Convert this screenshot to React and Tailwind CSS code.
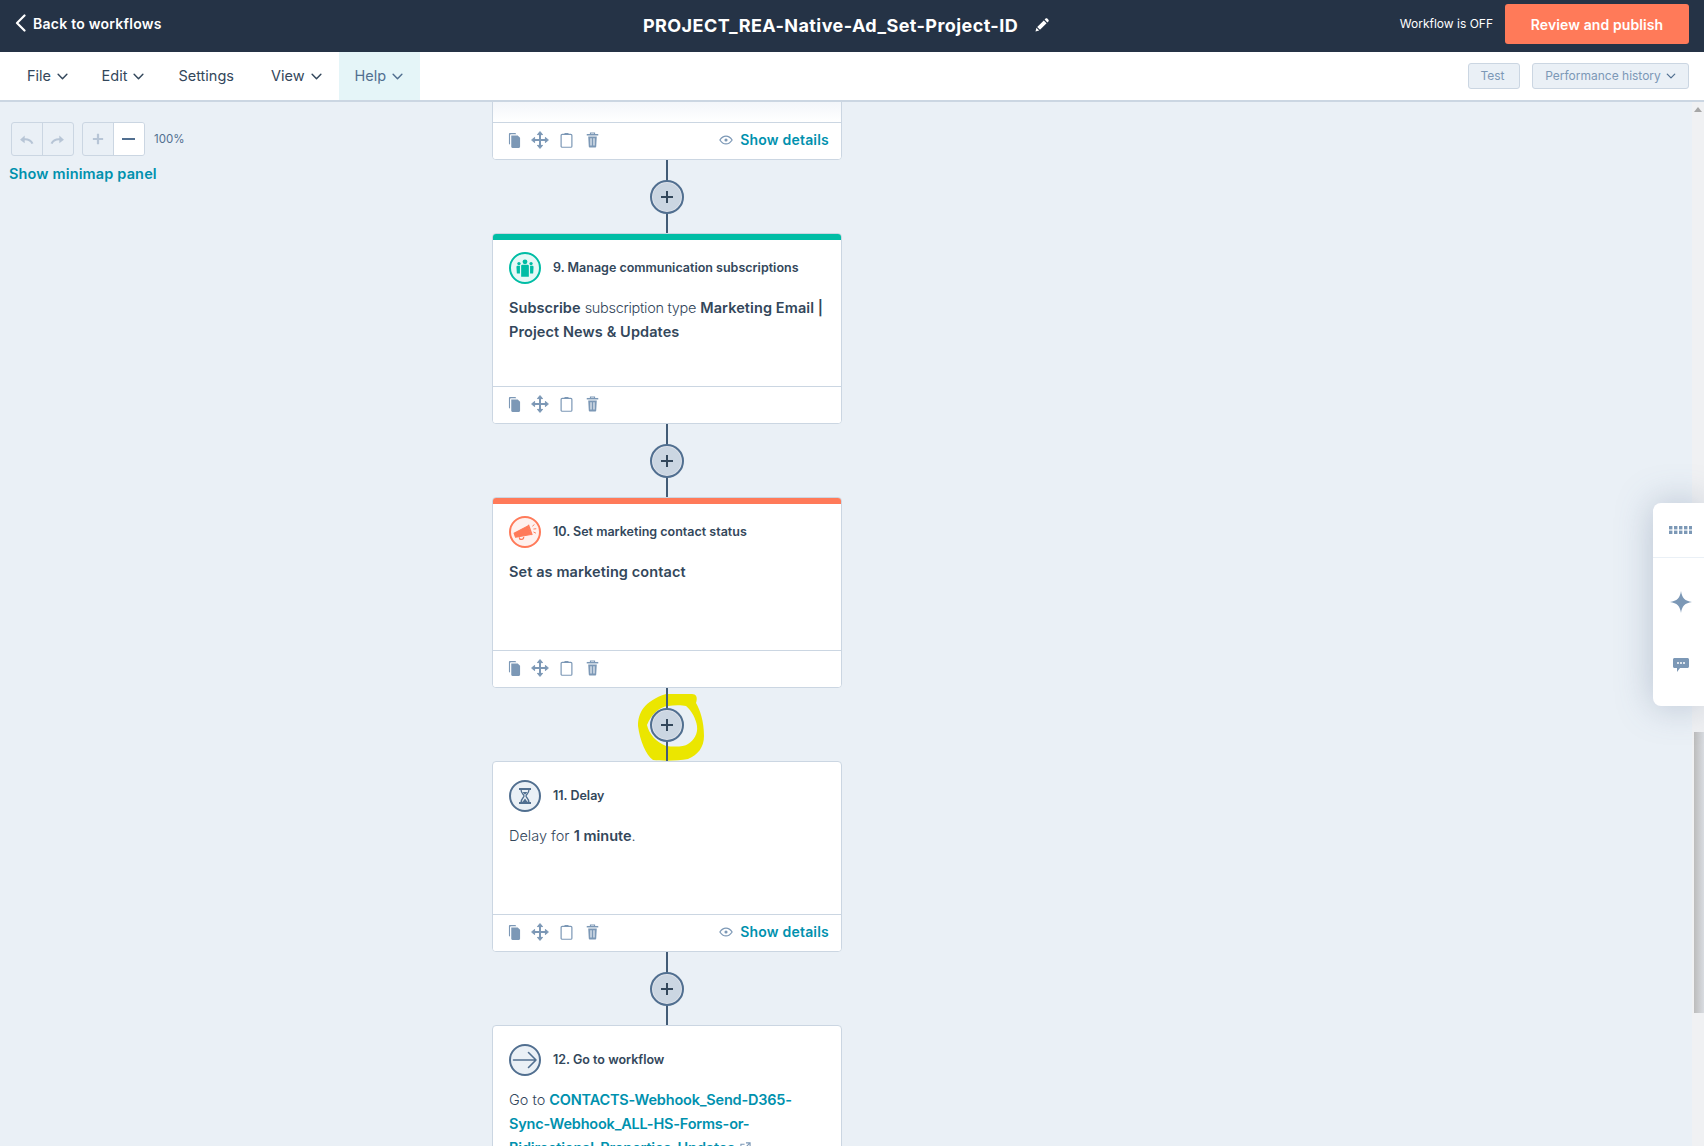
function Chevron({ className = 'w-[11px] h-[7px]' }) {
  return (
    <svg viewBox="0 0 12 8" className={className} fill="none" stroke="currentColor" strokeWidth="1.7" strokeLinecap="round" strokeLinejoin="round">
      <path d="M1 1.5 6 6.5 11 1.5" />
    </svg>
  );
}

function CopyIcon() {
  return (
    <svg viewBox="0 0 14 16" className="w-[13px] h-[15px]" fill="#7c98b6">
      <path d="M1 1.2C1 .5 1.5 0 2.2 0H8L9 1.2H3.5C2.7 1.2 2.2 1.8 2.2 2.5V12.2H1.8C1.3 12.2 1 11.8 1 11.3Z" />
      <path d="M3.5 2.5H10.5L13 5V14.5C13 15.3 12.5 16 11.7 16H4.8C4 16 3.5 15.3 3.5 14.5Z" />
    </svg>
  );
}
function MoveIcon() {
  return (
    <svg viewBox="0 0 18 18" className="w-[18px] h-[18px]" fill="#7c98b6" stroke="#7c98b6" strokeWidth="2">
      <path d="M9 2.5V15.5M2.5 9H15.5" fill="none" />
      <path d="M9 .6 11.6 3.6H6.4ZM9 17.4 6.4 14.4H11.6ZM.6 9 3.6 6.4V11.6ZM17.4 9 14.4 11.6V6.4Z" strokeWidth="1" strokeLinejoin="round" />
    </svg>
  );
}
function ClipIcon() {
  return (
    <svg viewBox="0 0 14 17" className="w-[13px] h-[16px]" fill="none" stroke="#7c98b6" strokeWidth="1.3">
      <rect x="1.2" y="2.5" width="11.6" height="13.8" rx="1.2" />
      <path d="M4.5 2.5C4.5 1.6 5 1 5.8 1H8.2C9 1 9.5 1.6 9.5 2.5V3.2H4.5Z" fill="#7c98b6" stroke="none" />
    </svg>
  );
}
function TrashIcon() {
  return (
    <svg viewBox="0 0 14 17" className="w-[13px] h-[16px]" fill="none" stroke="#7c98b6">
      <path d="M.8 2.8H13.2" strokeWidth="1.6" />
      <path d="M4.8 2.5V1H9.2V2.5" strokeWidth="1.2" />
      <path d="M2.4 4.6H11.6L11 15.6C11 16.2 10.6 16.6 10 16.6H4C3.4 16.6 3 16.2 3 15.6Z" fill="#7c98b6" stroke="none" />
      <path d="M5.4 6.5V14.5M8.6 6.5V14.5" stroke="#fff" strokeWidth="1.1" />
    </svg>
  );
}
function EyeIcon() {
  return (
    <svg viewBox="0 0 16 11" className="w-[14px] h-[10px]" fill="none" stroke="#7c98b6" strokeWidth="1.4">
      <path d="M1 5.5C3 2.4 5.3 1 8 1S13 2.4 15 5.5C13 8.6 10.7 10 8 10S3 8.6 1 5.5Z" />
      <circle cx="8" cy="5.5" r="1.8" fill="#7c98b6" stroke="none" />
    </svg>
  );
}

function PeopleIcon() {
  return (
    <svg viewBox="0 0 20 16" className="w-[22px] h-[18px]" fill="#00bda5">
      <circle cx="10" cy="2.4" r="2.2" />
      <path d="M6.5 6C6.5 5.2 7.2 5 8 5H12C12.8 5 13.5 5.2 13.5 6V16H6.5Z" />
      <circle cx="4.5" cy="4" r="1.5" />
      <path d="M2.2 7C2.2 6.4 2.8 6 3.4 6H5.4V13H2.6Z" />
      <circle cx="15.5" cy="4" r="1.5" />
      <path d="M17.8 7C17.8 6.4 17.2 6 16.6 6H14.6V13H17.4Z" />
    </svg>
  );
}
function MegaphoneIcon() {
  return (
    <svg viewBox="0 0 24 18" className="w-[25px] h-[19px] -rotate-6" fill="none" stroke="#ff7a59">
      <path d="M1 8.5 15 3 17 11.5 2 12.5Z" fill="#ff7a59" strokeWidth="1" strokeLinejoin="round" />
      <path d="M15.5 2 18 12" strokeWidth="1.4" />
      <path d="M5.5 13C5.5 16 9.8 16 9.8 13" strokeWidth="1.2" />
      <path d="M19.5 3.5 21 2.5M20.3 6.5H22.3M20 9.5 21.6 10.5" strokeWidth="0.9" strokeLinecap="round" />
    </svg>
  );
}
function HourglassIcon() {
  return (
    <svg viewBox="0 0 14 16" className="w-[14px] h-[16px]" fill="none" stroke="#516f90" strokeWidth="1.5">
      <path d="M1 1H13M1 15H13" strokeWidth="1.8" />
      <path d="M3 1.5C3 5.2 6 6.6 6 8S3 10.8 3 14.5H11C11 10.8 8 9.4 8 8S11 5.2 11 1.5" strokeWidth="1.3" />
      <path d="M4.5 14 7 10.5 9.5 14Z" fill="#516f90" stroke="none" />
      <path d="M4.6 4H9.4L7 6.8Z" fill="#516f90" stroke="none" />
    </svg>
  );
}
function ArrowIcon() {
  return (
    <svg viewBox="0 0 26 18" className="w-[26px] h-[18px]" fill="none" stroke="#516f90" strokeWidth="1.6" strokeLinecap="round" strokeLinejoin="round">
      <path d="M1.5 9H24M16.5 1.5 24 9 16.5 16.5" />
    </svg>
  );
}

function Plus({ className, stroke = 2 }) {
  return (
    <svg viewBox="0 0 14 14" className={className} fill="none" stroke="currentColor" strokeWidth={stroke}>
      <path d="M7 1V13M1 7H13" />
    </svg>
  );
}

function Connector({ highlight }) {
  return (
    <div className="relative h-[73px] flex items-center justify-center">
      {highlight && (
        <svg viewBox="0 0 66 68" className="absolute left-[146px] top-[5px] w-[66px] h-[68px]" fill="#ebe600" fillRule="evenodd">
          <path d="M28 1H54C58 1 60 4 58 10C62 17 66 28 66 43C66 54 60 62 50 66C40 68 24 68 15 67C8 62 2 48 0 33C0 20 6 8 28 1ZM30 13C22 14 14 20 9 32C11 41 18 49 28 53C36 54 46 54 50 51C56 47 60 41 59 33C58 26 54 18 48 13C44 12 36 12 30 13Z" />
        </svg>
      )}
      <div className="absolute top-0 bottom-0 left-1/2 -translate-x-1/2 w-[2px] bg-[#425b76]" />
      <div className="relative w-[34px] h-[34px] rounded-full bg-[#cbd6e2] border-2 border-[#516f90] flex items-center justify-center text-[#33475b] ring-1 ring-inset ring-[#dfe3eb]">
        <Plus className="w-[14px] h-[14px]" stroke={2} />
      </div>
    </div>
  );
}

function Card({ bar, iconRing, iconBg = 'bg-transparent', icon, title, children, details, className = '', bodyClass = '' }) {
  return (
    <div className={`flex flex-col h-[191px] rounded-[4px] border border-[#cbd6e2] bg-white overflow-hidden ${className}`}>
      <div className={`flex-1 min-h-0 flex flex-col ${bodyClass}`}>
        <div className={`h-[6px] shrink-0 ${bar}`} />
        <div className="flex items-center pl-[16px] pt-[12px]">
          <div className={`w-[32px] h-[32px] rounded-full border-2 flex items-center justify-center shrink-0 ${iconRing} ${iconBg}`}>{icon}</div>
          <div className="ml-[12px] text-[12.5px] font-semibold text-[#33475b] leading-[16px]">{title}</div>
        </div>
        <div className="pl-[16px] pr-[12px] pt-[12px] text-[14.5px] leading-[24px] text-[#33475b]">{children}</div>
      </div>
      <Footer details={details} />
    </div>
  );
}

function Footer({ details }) {
  return (
    <div className="h-[37px] shrink-0 border-t border-[#cbd6e2] flex items-center pl-[15px] pr-[12px] pb-[2px] bg-white">
      <div className="w-[24px] flex justify-start"><CopyIcon /></div>
      <div className="w-[26px] flex justify-start -ml-[1px]"><MoveIcon /></div>
      <div className="w-[26px] flex justify-start ml-[3px]"><ClipIcon /></div>
      <div className="w-[20px] flex justify-start"><TrashIcon /></div>
      {details && (
        <div className="ml-auto flex items-center gap-[7px]">
          <EyeIcon />
          <span className="text-[14px] tracking-[0.2px] font-semibold text-[#0091ae] leading-none">Show details</span>
        </div>
      )}
    </div>
  );
}

function NavItem({ label, chevron, active, className = '' }) {
  return (
    <div className={`h-full flex items-center gap-[6px] text-[14.5px] ${active ? 'bg-[#e5f5f8] text-[#516f90] w-[81px] pl-[16px]' : 'text-[#33475b]'} ${className}`}>
      <span>{label}</span>
      {chevron && <Chevron />}
    </div>
  );
}

export default function App() {
  return (
    <div className="h-screen flex flex-col overflow-hidden bg-[#eaf0f6] font-['Inter',sans-serif]">
      <header className="h-[52px] shrink-0 bg-[#253346] text-white flex items-center">
        <div className="w-[643px] shrink-0 flex items-center pl-[15px] mb-[4px]">
          <svg viewBox="0 0 11 18" className="w-[11px] h-[18px] mb-[2px]" fill="none" stroke="#fff" strokeWidth="2.2" strokeLinecap="round" strokeLinejoin="round">
            <path d="M9.5 1.5 2 9 9.5 16.5" />
          </svg>
          <span className="ml-[7px] text-[14px] tracking-[0.25px] font-semibold leading-none">Back to workflows</span>
        </div>
        <div className="text-[18px] font-bold leading-none tracking-[0.42px] whitespace-nowrap">PROJECT_REA-Native-Ad_Set-Project-ID</div>
        <svg viewBox="0 0 14 14" className="ml-[17px] w-[14px] h-[14px] mb-[2px]" fill="#fff">
          <path d="M0.5 13.5 1.4 9.8 4.2 12.6ZM2.2 9 8.8 2.4 11.6 5.2 5 11.8ZM9.6 1.6 10.6.6C11.1.1 11.8.1 12.3.6L13.4 1.7C13.9 2.2 13.9 2.9 13.4 3.4L12.4 4.4Z" />
        </svg>
        <div className="ml-auto flex items-center pr-[15px] mb-[4px]">
          <span className="text-[12px] text-white mr-[12px]">Workflow is OFF</span>
          <button className="w-[184px] h-[40px] rounded-[3px] bg-[#ff7a59] text-[14px] tracking-[0.1px] font-semibold text-white flex items-center justify-center">Review and publish</button>
        </div>
      </header>

      <nav className="h-[50px] shrink-0 bg-white border-b-2 border-[#cbd6e2] flex items-center">
        <div className="h-full flex items-center pl-[27px]">
          <NavItem label="File" chevron />
          <NavItem label="Edit" chevron className="ml-[33.5px]" />
          <NavItem label="Settings" className="ml-[34px]" />
          <NavItem label="View" chevron className="ml-[37px]" />
          <NavItem label="Help" chevron active className="ml-[17px]" />
        </div>
        <div className="ml-auto flex items-center gap-[12px] pr-[15px]">
          <button className="w-[52px] h-[26px] rounded-[3px] bg-[#eaf0f6] border border-[#cbd6e2] text-[12px] text-[#7c98b6] flex items-center justify-center pr-[3px]">Test</button>
          <button className="w-[157px] h-[26px] rounded-[3px] bg-[#eaf0f6] border border-[#cbd6e2] text-[12px] text-[#7c98b6] flex items-center justify-center gap-[5px]">
            <span>Performance history</span>
            <Chevron className="w-[10px] h-[6px] text-[#516f90]" />
          </button>
        </div>
      </nav>

      <main className="relative flex-1 min-h-0 overflow-hidden">
        <div className="absolute left-[11px] top-[20px] flex items-center">
          <div className="flex h-[34px] rounded-[3px] border border-[#cbd6e2]">
            <div className="w-[30.5px] border-r border-[#cbd6e2] flex items-center justify-center">
              <svg viewBox="0 0 16 12" className="w-[15px] h-[11px]" fill="none" stroke="#b7c5d6" strokeWidth="2.4"><path d="M14.5 10.5C12.5 6.5 9 5 3.5 6" /><path d="M1 6.2 6 1.5V10Z" fill="#b7c5d6" stroke="none" /></svg>
            </div>
            <div className="w-[30.5px] flex items-center justify-center">
              <svg viewBox="0 0 16 12" className="w-[15px] h-[11px]" fill="none" stroke="#b7c5d6" strokeWidth="2.4"><path d="M1.5 10.5C3.5 6.5 7 5 12.5 6" /><path d="M15 6.2 10 1.5V10Z" fill="#b7c5d6" stroke="none" /></svg>
            </div>
          </div>
          <div className="flex h-[34px] ml-[8px] rounded-[3px] border border-[#cbd6e2] overflow-hidden">
            <div className="w-[30.5px] border-r border-[#cbd6e2] flex items-center justify-center text-[#b7c5d6]">
              <Plus className="w-[12px] h-[12px]" stroke={2.6} />
            </div>
            <div className="w-[30.5px] bg-white flex items-center justify-center">
              <div className="w-[13px] h-[2px] bg-[#516f90]" />
            </div>
          </div>
          <span className="ml-[9px] mt-[1px] text-[11.5px] text-[#516f90]">100%</span>
        </div>
        <div className="absolute left-[9px] top-[63px] text-[14.5px] tracking-[0.15px] font-semibold text-[#0091ae] leading-[18px]">Show minimap panel</div>

        <div className="ml-[492px] w-[350px] mt-[-133px] flex flex-col">
          <Card bar="bg-transparent" iconRing="border-transparent" details bodyClass="bg-gradient-to-b from-[#f3f6fa] from-[87%] to-white" />
          <Connector />
          <Card bar="bg-[#00bda5]" iconRing="border-[#00bda5]" iconBg="bg-[#e5f8f6]" icon={<PeopleIcon />} title="9. Manage communication subscriptions">
            <b className="font-semibold tracking-[0.05px]">Subscribe</b> <span className="font-light tracking-[-0.3px]">subscription type</span> <b className="font-semibold tracking-[0.1px]">Marketing Email | Project News &amp; Updates</b>
          </Card>
          <Connector />
          <Card bar="bg-[#ff7a59]" iconRing="border-[#ff7a59]" iconBg="bg-[#fff1ee]" icon={<MegaphoneIcon />} title="10. Set marketing contact status">
            <b className="font-semibold tracking-[0.1px]">Set as marketing contact</b>
          </Card>
          <Connector highlight />
          <Card bar="bg-transparent" iconRing="border-[#516f90]" iconBg="bg-[#eaf0f6]" icon={<HourglassIcon />} title="11. Delay" details>
            <span className="font-light">Delay for</span> <b className="font-semibold">1 minute</b><span className="font-light">.</span>
          </Card>
          <Connector />
          <div className="h-[300px] rounded-[4px] border border-[#cbd6e2] bg-white">
            <div className="flex items-center pl-[16px] pt-[18px]">
              <div className="w-[32px] h-[32px] rounded-full border-2 border-[#516f90] bg-[#eaf0f6] flex items-center justify-center shrink-0"><ArrowIcon /></div>
              <div className="ml-[12px] text-[12.5px] font-semibold text-[#33475b] leading-[16px]">12. Go to workflow</div>
            </div>
            <div className="pl-[16px] pr-[12px] pt-[12px] text-[14.5px] leading-[24px] text-[#33475b]">
              <span className="font-light">Go to</span> <span className="font-semibold tracking-[-0.2px] text-[#0091ae]">CONTACTS-Webhook_Send-D365-Sync-Webhook_ALL-HS-Forms-or-Bidirectional-Properties-Updates</span>
              <svg viewBox="0 0 12 12" className="inline ml-[5px] w-[11px] h-[11px] align-baseline" fill="none" stroke="#7c98b6" strokeWidth="1.2"><path d="M9.5 7V11H1V2.5H5M6.5 1H11V5.5M11 1 5.5 6.5" /></svg>
            </div>
          </div>
        </div>

        <div className="absolute right-0 top-0 bottom-0 w-[12px] bg-[#f0f1f3]">
          <div className="mx-auto mt-[5px] w-0 h-0 border-x-[4px] border-x-transparent border-b-[5px] border-b-[#a6a6a6]" />
          <div className="absolute left-[2px] right-0 top-[630px] h-[281px] bg-gradient-to-r from-[#bcbcbc] to-[#d9dce1]" />
        </div>

        <div className="absolute right-0 top-[401px] w-[51px] h-[203px] rounded-l-[8px] bg-white shadow-[0_0_36px_rgba(90,110,140,0.35)] flex flex-col items-center pl-[4px]">
          <div className="h-[55px] w-[calc(100%+4px)] -ml-[4px] pl-[4px] shrink-0 border-b border-[#eaf0f6] flex items-center justify-center">
            <svg viewBox="0 0 23 8" className="w-[23px] h-[8px]" fill="#7c98b6">
              {[0, 5, 10, 15, 20].map((x) => (
                <g key={x}>
                  <rect x={x} y="0" width="3.4" height="3.4" />
                  <rect x={x} y="4.6" width="3.4" height="3.4" />
                </g>
              ))}
            </svg>
          </div>
          <svg viewBox="0 0 22 22" className="w-[22px] h-[22px] mt-[33px] shrink-0" fill="#7c98b6">
            <path d="M11 0C11.8 6.5 15 10.2 22 11C15 11.8 11.8 15.5 11 22C10.2 15.5 7 11.8 0 11C7 10.2 10.2 6.5 11 0Z" />
          </svg>
          <svg viewBox="0 0 16 14" className="w-[16px] h-[14px] mt-[45px] shrink-0" fill="#7c98b6">
            <path d="M1.5 0H14.5C15.3 0 16 .7 16 1.5V8.5C16 9.3 15.3 10 14.5 10H7L4 14V10H1.5C.7 10 0 9.3 0 8.5V1.5C0 .7.7 0 1.5 0Z" />
            <circle cx="5" cy="5" r="1" fill="#fff" />
            <circle cx="8" cy="5" r="1" fill="#fff" />
            <circle cx="11" cy="5" r="1" fill="#fff" />
          </svg>
        </div>
      </main>
    </div>
  );
}
